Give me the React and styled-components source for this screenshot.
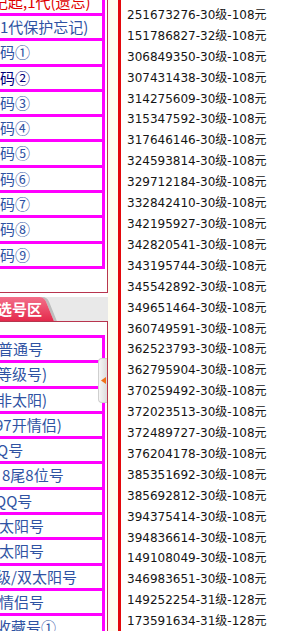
import React from "react";
import styled, { createGlobalStyle } from "styled-components";

const GlobalStyle = createGlobalStyle`
  html, body { margin: 0; padding: 0; background: #fff; overflow: hidden; }
`;

const Page = styled.div`
  display: flex;
  margin-top: -16px;
  height: 680px;
`;

const Side = styled.div`
  position: relative;
  flex: 0 0 108px;
  width: 108px;
`;

const Panel = styled.div`
  border-right: 1px solid #b8354e;
  border-top: ${(p) => (p.$top ? "1px solid #b8354e" : "none")};
  border-bottom: ${(p) => (p.$bottom ? "1px solid #b8354e" : "none")};
  padding: ${(p) => p.$pad};
  background: #fff;
`;

const Row = styled.div`
  height: 28.3px;
  box-sizing: border-box;
  border: 3px solid #f0f;
  border-left: none;
  margin-top: -3px;
  &:first-child { margin-top: 0; }
  font: 15px/22px "Noto Sans CJK SC", sans-serif;
  color: ${(p) => p.$color || "#2f53a3"};
  white-space: nowrap;
  overflow: hidden;
  text-indent: ${(p) => p.$indent || 0}px;
`;

const TabBar = styled.div`
  margin-top: 4px;
  height: 24px;
  background: #e9e9e9;
  border-right: 1px solid #e9e9e9;
`;

const Tab = styled.div`
  position: relative;
  display: inline-block;
  height: 24px;
  width: 40px;
  background: linear-gradient(#f3708a, #e42a4c);
  font: bold 15px/24px "Noto Sans CJK SC", sans-serif;
  color: #fff;
  white-space: nowrap;
  text-indent: -3px;
  &::after {
    content: "";
    position: absolute;
    top: 0;
    right: -9px;
    width: 16px;
    height: 24px;
    background: linear-gradient(#f3708a, #e42a4c);
    border-top-right-radius: 5px;
    transform: skewX(22deg);
    box-shadow: 3px 0 0 #bdbdbd;
    z-index: 0;
  }
  span { position: relative; z-index: 1; }
`;

const Toggle = styled.div`
  position: absolute;
  left: 98px;
  top: 374px;
  width: 9px;
  height: 45px;
  box-sizing: border-box;
  border: 1px solid #cfcfcf;
  border-right: none;
  border-radius: 4px 0 0 4px;
  background: linear-gradient(to right, #f6f6f6, #dcdcdc);
  display: flex;
  align-items: center;
  justify-content: center;
`;

const Gap = styled.div`
  flex: 0 0 10px;
  background: #fffdf0;
`;

const Main = styled.div`
  flex: 1;
  border-left: 3px solid #e3080c;
  padding-left: 6px;
  font: 12px/20.9px "DejaVu Sans", "Noto Sans CJK SC", sans-serif;
  color: #151515;
  white-space: nowrap;
`;

const Item = styled.div``;

const first = [
  { t: "记起,1代(遗忘)", c: "#e00000", i: -7 },
  { t: "1代保护忘记)" },
  { t: "码①" },
  { t: "码②", c: "#00007a" },
  { t: "码③" },
  { t: "码④" },
  { t: "码⑤" },
  { t: "码⑥" },
  { t: "码⑦" },
  { t: "码⑧" },
  { t: "码⑨" },
];

const second = [
  { t: "普通号", i: -2 },
  { t: "等级号)", i: -3 },
  { t: "非太阳)", i: -3 },
  { t: "97开情侣)", i: -5 },
  { t: "Q号", i: -3 },
  { t: "8尾8位号", i: 2 },
  { t: "QQ号", i: -5 },
  { t: "太阳号", i: -1 },
  { t: "太阳号", i: -1 },
  { t: "级/双太阳号", i: -4 },
  { t: "情侣号", i: -1 },
  { t: "收藏号①", i: -4 },
];

const numbers = [
  "251673276-30级-108元",
  "151786827-32级-108元",
  "306849350-30级-108元",
  "307431438-30级-108元",
  "314275609-30级-108元",
  "315347592-30级-108元",
  "317646146-30级-108元",
  "324593814-30级-108元",
  "329712184-30级-108元",
  "332842410-30级-108元",
  "342195927-30级-108元",
  "342820541-30级-108元",
  "343195744-30级-108元",
  "345542892-30级-108元",
  "349651464-30级-108元",
  "360749591-30级-108元",
  "362523793-30级-108元",
  "362795904-30级-108元",
  "370259492-30级-108元",
  "372023513-30级-108元",
  "372489727-30级-108元",
  "376204178-30级-108元",
  "385351692-30级-108元",
  "385692812-30级-108元",
  "394375414-30级-108元",
  "394836614-30级-108元",
  "149108049-30级-108元",
  "346983651-30级-108元",
  "149252254-31级-128元",
  "173591634-31级-128元",
];

export default function App() {
  return (
    <>
      <GlobalStyle />
      <Page>
        <Side>
          <Panel $pad="3.7px 2px 23px 0" $bottom>
            {first.map((r, n) => (
              <Row key={n} $color={r.c} $indent={r.i}>{r.t}</Row>
            ))}
          </Panel>
          <TabBar>
            <Tab><span>选号区</span></Tab>
          </TabBar>
          <Panel $pad="13px 2px 0 0" $top>
            {second.map((r, n) => (
              <Row key={n} $indent={r.i}>{r.t}</Row>
            ))}
          </Panel>
          <Toggle>
            <svg width="5" height="7" viewBox="0 0 5 7">
              <polygon points="5,0 0,3.5 5,7" fill="#f07018" />
            </svg>
          </Toggle>
        </Side>
        <Gap />
        <Main>
          <Item>三、</Item>
          {numbers.map((s) => (
            <Item key={s}>{s}</Item>
          ))}
        </Main>
      </Page>
    </>
  );
}
